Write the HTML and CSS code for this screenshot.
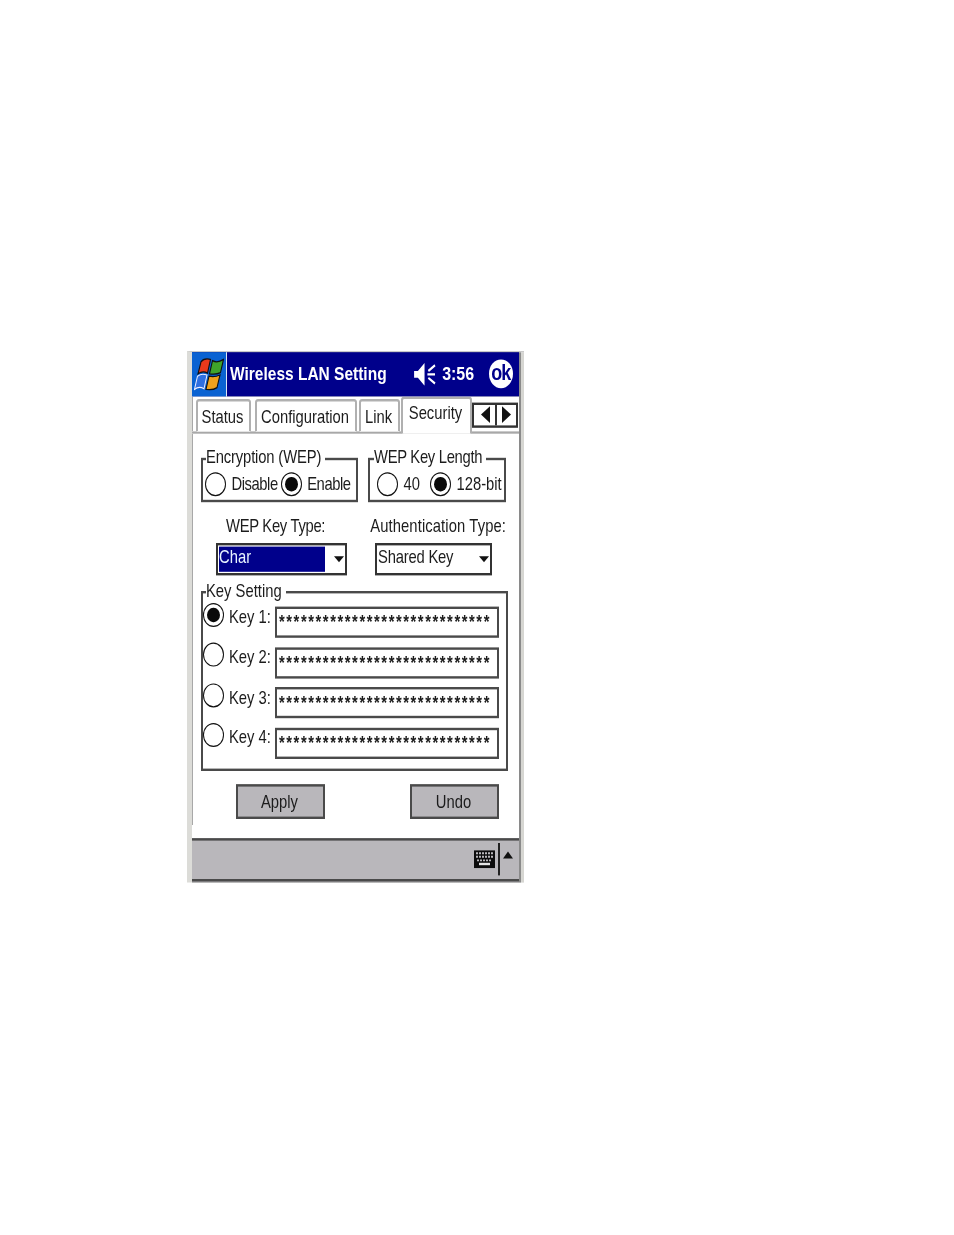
FILE: index.html
```html
<!DOCTYPE html>
<html lang="en">
<head>
<meta charset="utf-8">
<title>Wireless LAN Setting</title>
<link rel="stylesheet" href="styles.css">
</head>
<body>
<div class="stage">
<div class="device">
  <header class="title">
    <div class="logo">
      <svg class="flag" viewBox="0 0 30 27" aria-hidden="true">
        <path d="M7 3C10 0 13 0 16.500 1L13.500 12.500C10.500 11 7.500 11 4 13Z" fill="#e8391c" stroke="#111" stroke-width="1.1"/>
        <path d="M18.500 2C21.500 3.500 25 3.500 29.500 1L26.500 12C23 13.500 19.500 13.500 15.500 13Z" fill="#3fa52b" stroke="#111" stroke-width="1.1"/>
        <path d="M3.500 15C6.500 13 9.500 13 13 14L10 25.500C7 24 3.500 24 .5 26Z" fill="#2f6fe0" stroke="#eef" stroke-width="1"/>
        <path d="M15 15C18 15.500 22 15.500 26 14L23 24.500C19.500 26.500 15.500 26.500 12 26Z" fill="#f0a21c" stroke="#111" stroke-width="1.100"/>
      </svg>
    </div>
    <span class="app-name">Wireless LAN Setting</span>
    <svg class="speaker" viewBox="0 0 24 20" aria-hidden="true">
      <path d="M0 7H4L11 0V20L4 13H0Z" fill="#fff"/>
      <path d="M22 2L15 7M14 10H22M15 13L22 18" stroke="#fff" stroke-width="2" fill="none"/>
    </svg>
    <span class="clock">3:56</span>
    <span class="ok">ok</span>
  </header>

  <nav class="tabs">
    <span class="tab tab-status">Status</span>
    <span class="tab tab-config">Configuration</span>
    <span class="tab tab-link">Link</span>
    <span class="tab tab-active">Security</span>
    <span class="scroller">
      <span class="scroll-cell"><i class="arrow-left"></i></span>
      <span class="scroll-cell"><i class="arrow-right"></i></span>
    </span>
  </nav>

  <main class="content">
    <div class="row-groups">
      <section class="group group-enc">
        <span class="legend">Encryption (WEP)</span>
        <span class="radio"></span><span class="opt opt-disable">Disable</span>
        <span class="radio on"></span><span class="opt">Enable</span>
      </section>
      <section class="group group-len">
        <span class="legend">WEP Key Length</span>
        <span class="radio"></span><span class="opt opt-40">40</span>
        <span class="radio on"></span><span class="opt">128-bit</span>
      </section>
    </div>

    <div class="row-labels">
      <span class="label label-type">WEP Key Type:</span>
      <span class="label label-auth">Authentication Type:</span>
    </div>

    <div class="row-selects">
      <div class="select select-type"><span class="value selected">Char</span><i class="arrow-down"></i></div>
      <div class="select select-auth"><span class="value">Shared Key</span><i class="arrow-down"></i></div>
    </div>

    <section class="group group-keys">
      <span class="legend">Key Setting</span>
      <div class="key-row"><span class="radio on"></span><span class="key-label">Key 1:</span><span class="key-input">*****************************</span></div>
      <div class="key-row"><span class="radio"></span><span class="key-label">Key 2:</span><span class="key-input">*****************************</span></div>
      <div class="key-row"><span class="radio"></span><span class="key-label">Key 3:</span><span class="key-input">*****************************</span></div>
      <div class="key-row"><span class="radio"></span><span class="key-label">Key 4:</span><span class="key-input">*****************************</span></div>
    </section>

    <div class="row-buttons">
      <button class="btn">Apply</button>
      <button class="btn">Undo</button>
    </div>
  </main>
  <div class="gap"></div>

  <footer class="bar">
    <svg class="keyboard" viewBox="0 0 21 15" aria-hidden="true">
      <rect width="21" height="15" fill="#0c0c0c"/>
      <path d="M2 2.500H19M2 5.500H19" stroke="#b9b7bb" stroke-width="1.600" stroke-dasharray="2 1" fill="none"/>
      <path d="M3 8.500H18" stroke="#b9b7bb" stroke-width="1.400" stroke-dasharray="2 1" fill="none"/>
      <rect x="5" y="10.500" width="11" height="2" fill="#e4e4e4"/>
    </svg>
    <span class="divider"></span>
    <i class="arrow-up"></i>
  </footer>
</div>
</div>
</body>
</html>
```

FILE: styles.css
```css
* { box-sizing: border-box; }

html, body { margin: 0; background: #fff; }

body {
  font-family: "Liberation Sans", Arial, sans-serif;
  font-size: 14.8px;
  line-height: 16px;
  color: #1c1c1c;
}

.stage {
  height: 1235px;
  padding: 351px 0 0 187px;
  overflow: hidden;
  filter: blur(0.45px);
}

.device {
  width: 337px;
  height: 443.4px;
  display: flex;
  flex-direction: column;
  padding-right: 5px;
  background: linear-gradient(to left, #d6d6d2 3px, #8a8a8a 3px);
  border-top: 1px solid #c9c9c9;
  border-left: 5px solid #dcdcd8;
  transform: scaleY(1.2);
  transform-origin: 0 0;
}

/* Title bar */
.title {
  height: 36.7px;
  flex: none;
  display: flex;
  align-items: center;
  background: #00008b;
  color: #fff;
}

.logo {
  width: 35px;
  height: 100%;
  flex: none;
  display: flex;
  align-items: center;
  justify-content: center;
  background: #0a62d2;
  border-right: 1px solid #dfe6f5;
}

.flag { width: 30px; height: 27px; }

.app-name {
  margin-left: 3px;
  font-size: 15.5px;
  font-weight: 700;
  white-space: nowrap;
}

.speaker {
  width: 23px;
  height: 19px;
  margin-left: 27.5px;
  flex: none;
}

.clock {
  margin-left: 5px;
  font-size: 16px;
  font-weight: 700;
}

.ok {
  width: 24px;
  height: 24px;
  margin-left: 14.5px;
  flex: none;
  border-radius: 50%;
  background: #fff;
  color: #00008b;
  font-size: 18px;
  font-weight: 700;
  letter-spacing: -1px;
  line-height: 22px;
  text-align: center;
}

/* Tabs */
.tabs {
  height: 31px;
  flex: none;
  display: flex;
  align-items: flex-end;
  padding-left: 4px;
  background: #fff;
  border-bottom: 2px solid #a8a8a8;
  box-shadow: inset 1px 0 0 #a8a8a8;
}

.tab {
  height: 26.7px;
  display: flex;
  align-items: center;
  justify-content: center;
  padding: 1.5px 2px 0 0;
  background: #fff;
  border: 2px solid #b0b0b0;
  border-bottom: 0;
  border-radius: 3px 3px 0 0;
}

.tab-status { width: 55px; }
.tab-config { width: 102px; margin-left: 4px; }
.tab-link { width: 41px; margin-left: 2px; }

.tab-active {
  width: 71px;
  height: 31px;
  margin-left: 1px;
  margin-bottom: -2px;
  padding: 0 2px 4px 0;
}

.scroller {
  width: 46px;
  height: 21px;
  align-self: flex-start;
  margin-top: 5px;
  display: flex;
  background: #fff;
  border: 2px solid #333;
}

.scroll-cell {
  flex: 1;
  display: flex;
  align-items: center;
  justify-content: center;
}

.scroll-cell:first-child { padding-left: 2px; }
.scroll-cell + .scroll-cell { border-left: 2px solid #333; }

.arrow-left, .arrow-right {
  width: 0;
  height: 0;
  border-top: 7px solid transparent;
  border-bottom: 7px solid transparent;
}

.arrow-left { border-right: 9px solid #111; }
.arrow-right { border-left: 9px solid #111; }

/* Content */
.content {
  flex: 1;
  min-height: 0;
  display: flex;
  flex-direction: column;
  padding-left: 9px;
  background: #fff;
  box-shadow: inset 1px 0 0 #a8a8a8;
}

.row-groups {
  display: flex;
  gap: 10px;
  margin-top: 20px;
}

.group {
  position: relative;
  display: flex;
  align-items: flex-start;
  border: 2px solid #4a4a4a;
}

.legend {
  position: absolute;
  top: -10.8px;
  left: 3px;
  padding-right: 4px;
  background: #fff;
  white-space: nowrap;
}

.group-enc .legend { letter-spacing: -0.15px; }
.group-len .legend { left: 4px; letter-spacing: -0.3px; }

.group-enc {
  width: 157px;
  height: 37.5px;
  padding: 10.500px 0 0 2px;
}

.group-len {
  width: 138px;
  height: 37.5px;
  padding: 10.500px 0 0 7px;
}

.radio {
  width: 21px;
  height: 20px;
  flex: none;
  display: flex;
  align-items: center;
  justify-content: center;
  background: #fff;
  border: 1px solid #111;
  border-radius: 50%;
}

.radio.on::after {
  content: "";
  width: 13px;
  height: 12.5px;
  border-radius: 50%;
  background: #0a0a0a;
}

.group .opt {
  margin-top: 2px;
  margin-left: 5.5px;
  white-space: nowrap;
}

.group-enc .opt { letter-spacing: -0.45px; }

.opt-disable { margin-right: 3px; }
.opt-40 { margin-right: 10px; }

.row-labels {
  display: flex;
  margin-top: 12px;
}

.label { white-space: nowrap; }
.label-type { margin-left: 25px; letter-spacing: -0.3px; }
.label-auth { margin-left: 45px; letter-spacing: 0.1px; }

.row-selects {
  display: flex;
  margin-top: 6.2px;
}

.select {
  height: 26.7px;
  display: flex;
  align-items: center;
  background: #fff;
  border: 2px solid #333;
}

.select-type { width: 131px; margin-left: 15px; padding: 1px; }
.select-auth { width: 117px; margin-left: 28px; padding: 1px; }

.value {
  height: 100%;
  display: flex;
  align-items: center;
  padding-bottom: 2.500px;
}

.select-type .value { width: 106px; }
.select-auth .value { width: 98px; letter-spacing: -0.2px; }

.selected {
  background: #00008b;
  color: #e6f2ff;
}

.select-type .arrow-down { margin-left: 8.5px; }
.select-auth .arrow-down { margin-left: 3.5px; }

.arrow-down {
  width: 0;
  height: 0;
  margin-top: -1px;
  border-left: 5.5px solid transparent;
  border-right: 5.5px solid transparent;
  border-top: 5.5px solid #111;
}

.group-keys {
  width: 307px;
  height: 150px;
  margin-top: 13.3px;
  flex-direction: column;
  gap: 7.5px;
  padding-top: 11px;
}

.key-row {
  width: 100%;
  height: 26px;
  display: flex;
  align-items: flex-start;
}

.key-row .radio { margin-top: -3.5px; margin-left: -0.5px; }

.key-label {
  margin-left: 5.5px;
  margin-top: 0.4px;
  white-space: nowrap;
}

.key-input {
  width: 224px;
  height: 26px;
  margin-left: auto;
  margin-right: 7px;
  padding: 3px 0 0 2px;
  overflow: hidden;
  background: #fff;
  border: 2px solid #4a4a4a;
  font-weight: 700;
  letter-spacing: 1.55px;
  white-space: nowrap;
}

.row-buttons {
  display: flex;
  gap: 85px;
  margin-top: 10.8px;
  margin-left: 35px;
}

.btn {
  width: 89px;
  height: 29.2px;
  padding: 0 2px 0 0;
  background: #b9b7bb;
  border: 2px solid #4a4a4a;
  color: #1c1c1c;
  font: inherit;
}

.gap {
  height: 11px;
  flex: none;
  background: #fff;
}

/* Bottom bar */
.bar {
  height: 35.9px;
  flex: none;
  display: flex;
  align-items: center;
  justify-content: flex-end;
  margin-bottom: 1.6px;
  background: #b9b7bb;
  border-top: 2px solid #4a4a4a;
  border-bottom: 2px solid #4a4a4a;
  padding-right: 6px;
}

.keyboard {
  width: 21px;
  height: 15px;
  margin-top: -1px;
}

.divider {
  width: 2px;
  height: 27px;
  margin-left: 2.5px;
  background: #222;
}

.arrow-up {
  width: 0;
  height: 0;
  margin-left: 3.5px;
  margin-top: -8px;
  border-left: 5px solid transparent;
  border-right: 5px solid transparent;
  border-bottom: 6px solid #111;
}
```
